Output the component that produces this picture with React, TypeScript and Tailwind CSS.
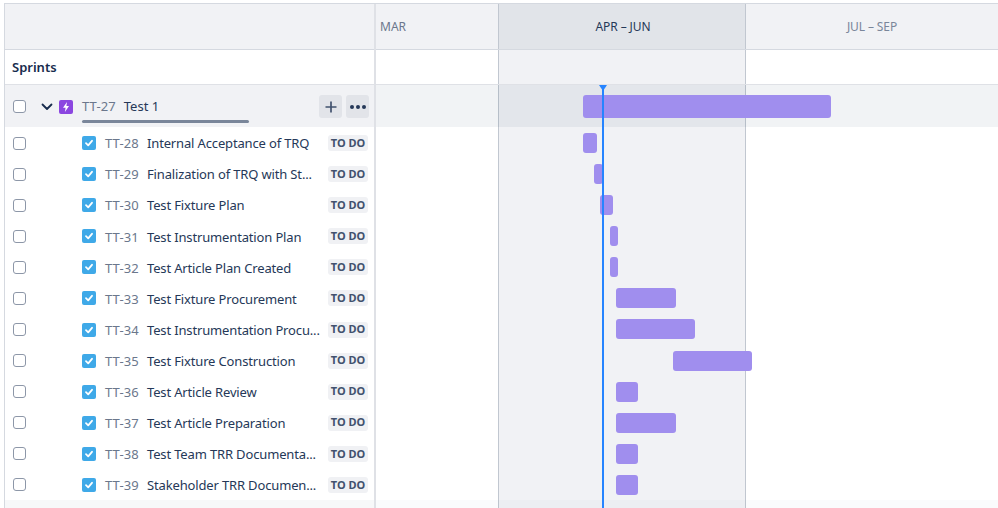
const FONT = "font-['Noto_Sans','Open_Sans',sans-serif]";

const rows: { id: string; name: string; left: number; width: number }[] = [
  { id: "TT-28", name: "Internal Acceptance of TRQ", left: 207, width: 14 },
  { id: "TT-29", name: "Finalization of TRQ with St...", left: 218, width: 9 },
  { id: "TT-30", name: "Test Fixture Plan", left: 224, width: 13 },
  { id: "TT-31", name: "Test Instrumentation Plan", left: 234, width: 8 },
  { id: "TT-32", name: "Test Article Plan Created", left: 234, width: 8 },
  { id: "TT-33", name: "Test Fixture Procurement", left: 240, width: 60 },
  { id: "TT-34", name: "Test Instrumentation Procu...", left: 240, width: 79 },
  { id: "TT-35", name: "Test Fixture Construction", left: 297, width: 79 },
  { id: "TT-36", name: "Test Article Review", left: 240, width: 22 },
  { id: "TT-37", name: "Test Article Preparation", left: 240, width: 60 },
  { id: "TT-38", name: "Test Team TRR Documenta...", left: 240, width: 22 },
  { id: "TT-39", name: "Stakeholder TRR Documen...", left: 240, width: 22 },
];

function Box({ className = "" }: { className?: string }) {
  return (
    <span
      className={`block w-[13px] h-[13px] rounded-[3px] border-[1.5px] border-[#8d97a8] bg-white shrink-0 ${className}`}
    />
  );
}

function StoryIcon() {
  return (
    <span className="flex items-center justify-center w-[14px] h-[14px] rounded-[2px] bg-[#3fa9e8] shrink-0">
      <svg width="10" height="10" viewBox="0 0 10 10" fill="none">
        <path d="M2 5.2 L4.2 7.3 L8 2.8" stroke="white" strokeWidth="1.8" strokeLinecap="round" strokeLinejoin="round" />
      </svg>
    </span>
  );
}

function EpicIcon() {
  return (
    <span className="flex items-center justify-center w-[14px] h-[14px] rounded-[2px] bg-[#8b46e0] shrink-0">
      <svg width="10" height="12" viewBox="0 0 10 12">
        <path d="M6 1 L2 6.8 H4.6 L3.9 11 L8 5 H5.4 Z" fill="white" />
      </svg>
    </span>
  );
}

function Row({ id, name }: { id: string; name: string }) {
  return (
    <div className="flex items-center h-[31.09px] shrink-0 pt-[2px] pl-[8px] pr-[6px]">
      <Box className="-mt-[1px]" />
      <span className="ml-[56px] -mt-[1px]"><StoryIcon /></span>
      <span className="ml-[9px] mt-[1px] w-[42px] shrink-0 text-[13px] tracking-[0.1px] text-[#6b778c]">{id}</span>
      <span className="w-[181px] mt-[1px] shrink-0 text-[13px] tracking-[-0.15px] text-[#253858] whitespace-nowrap">{name}</span>
      <span className="flex items-center justify-center w-[41px] h-[16px] -mt-[1px] rounded-[3px] bg-[#f0f1f4] text-[11px] font-bold text-[#42526e]">
        TO DO
      </span>
    </div>
  );
}

export default function App() {
  return (
    <div className={`${FONT} w-[998px] h-[508px] overflow-hidden bg-white pl-[4px] pt-[3px] flex flex-col`}>
      <div className="flex flex-1 min-h-0 border-t border-l border-[#d5d9e0]">
        {/* left panel */}
        <div className="w-[371px] shrink-0 flex flex-col border-r-2 border-[#dfe1e6] relative">
          <div className="h-[46px] shrink-0 bg-[#f1f2f5] border-b border-[#d5d9e0]" />
          <div className="h-[35px] shrink-0 border-b border-[#dfe1e6] flex items-center pt-[1px] pl-[7px] text-[13px] font-semibold text-[#172b4d]">
            Sprints
          </div>
          <div className="h-[42px] shrink-0 bg-[#f1f2f5] flex items-center pt-[1px] pl-[8px] pr-[5px] relative">
            <Box />
            <svg className="ml-[15px]" width="12" height="8" viewBox="0 0 12 8" fill="none">
              <path d="M1.5 1.5 L6 6 L10.5 1.5" stroke="#172b4d" strokeWidth="1.8" strokeLinecap="round" strokeLinejoin="round" />
            </svg>
            <span className="ml-[6px]"><EpicIcon /></span>
            <span className="ml-[9px] text-[13px] tracking-[0.1px] text-[#6b778c]">TT-27</span>
            <span className="ml-[8px] text-[13px] text-[#253858]">Test 1</span>
            <div className="ml-auto flex gap-[4px]">
              <span className="flex items-center justify-center w-[23px] h-[23px] rounded-[3px] bg-[#e2e4e9]">
                <svg width="12" height="12" viewBox="0 0 12 12" fill="none">
                  <path d="M6 .5 V11.5 M.5 6 H11.5" stroke="#42526e" strokeWidth="1.7" />
                </svg>
              </span>
              <span className="flex items-center justify-center w-[23px] h-[23px] rounded-[3px] bg-[#e2e4e9]">
                <svg width="18" height="6" viewBox="0 0 18 6" fill="#253858">
                  <circle cx="3" cy="3" r="2" />
                  <circle cx="9" cy="3" r="2" />
                  <circle cx="15" cy="3" r="2" />
                </svg>
              </span>
            </div>
            <span className="absolute left-[77px] bottom-[4px] w-[167px] h-[3px] rounded-full bg-[#7a869a]" />
          </div>
          {rows.map((r) => (
            <Row key={r.id} id={r.id} name={r.name} />
          ))}
          <div className="flex-1 bg-[#f7f8f9]" />
        </div>

        {/* timeline */}
        <div className="flex-1 min-w-0 relative flex flex-col">
          <div className="h-[46px] shrink-0 flex border-b border-[#d5d9e0] text-[12px]">
            <div className="w-[122px] shrink-0 bg-[#f1f2f5] flex items-center pl-[4px] text-[#6b778c]">MAR</div>
            <div className="w-[248px] shrink-0 bg-[#e1e4e9] border-x border-[#c1c7d0] flex items-center justify-center text-[#253858] pl-[2px] tracking-[-0.1px]">
              APR – JUN
            </div>
            <div className="flex-1 bg-[#f1f2f5] flex items-center justify-center text-[#7a869a] tracking-[-0.1px]">JUL – SEP</div>
          </div>
          <div className="flex-1 relative">
            {/* quarter highlight */}
            <div className="absolute left-[122px] top-0 bottom-0 w-[248px] bg-[#f1f2f5] border-x border-[#c1c7d0]" />
            <div className="relative flex flex-col h-full">
              <div className="h-[35px] shrink-0 border-b border-[#dfe1e6]" />
              <div className="h-[42px] shrink-0 bg-[#172b4d]/[0.06] flex items-start pt-[10px]">
                <div className="ml-[207px] w-[248px] h-[23px] rounded-[3px] bg-[#a08eee]" />
              </div>
              {rows.map((r) => (
                <div key={r.id} className="h-[31.09px] shrink-0 pt-[6px]">
                  <div
                    className="h-[20px] rounded-[3px] bg-[#a08eee]"
                    style={{ marginLeft: r.left, width: r.width }}
                  />
                </div>
              ))}
              <div className="flex-1 bg-[#172b4d]/[0.02]" />
            </div>
            {/* today marker */}
            <div className="absolute left-[226px] top-[35px] bottom-0 w-[2px] bg-[#2684ff]" />
            <svg className="absolute left-[223px] top-[35px]" width="8" height="6" viewBox="0 0 8 6">
              <path d="M0 0 H8 L4 6 Z" fill="#2684ff" />
            </svg>
          </div>
        </div>
      </div>
    </div>
  );
}
